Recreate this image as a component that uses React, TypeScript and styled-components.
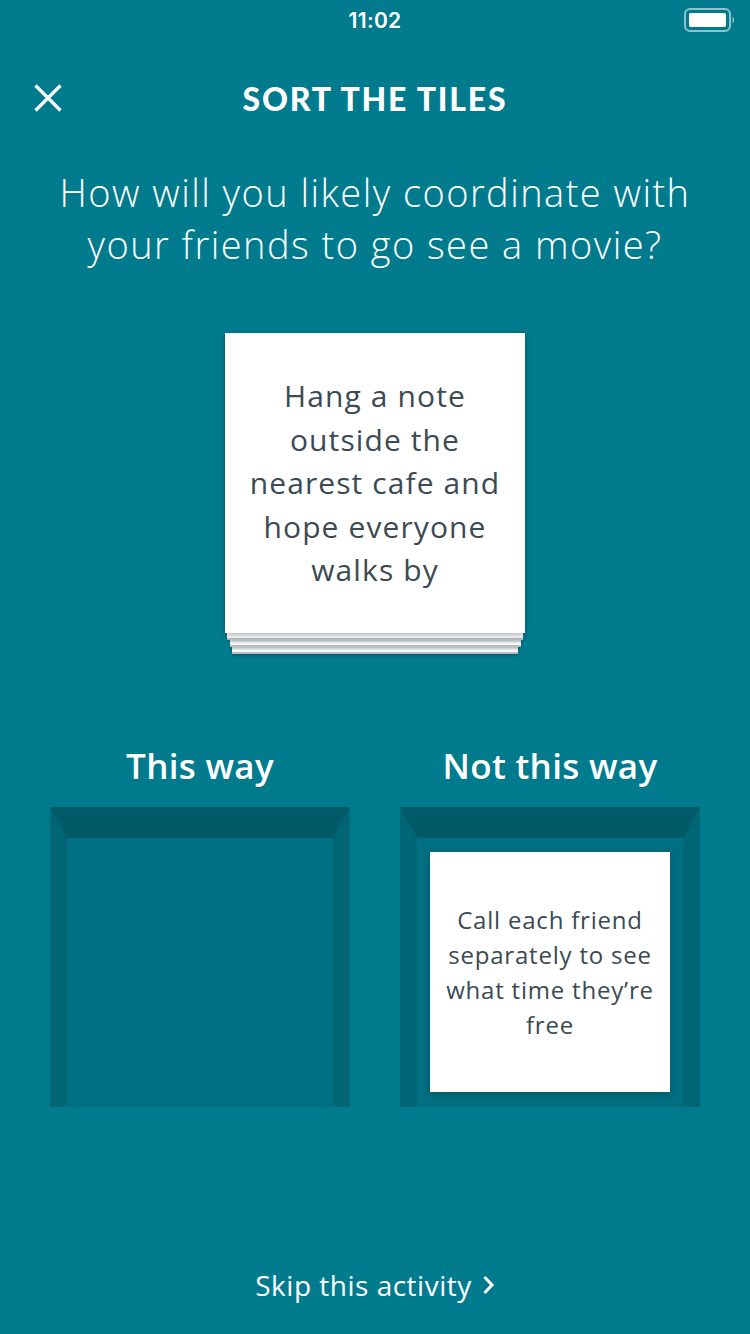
import React from "react";
import styled, { createGlobalStyle } from "styled-components";

const Global = createGlobalStyle`
  html, body { margin: 0; padding: 0; background: #007b8e; }
  * { box-sizing: border-box; }
`;

const FONT = `"Open Sans", "Noto Sans", sans-serif`;
const TITLE_FONT = `"Lato", "Open Sans", sans-serif`;

const Screen = styled.div`
  width: 750px;
  height: 1334px;
  background: #007b8e;
  color: #ffffff;
  font-family: ${FONT};
  display: flex;
  flex-direction: column;
  align-items: center;
  overflow: hidden;
`;

const StatusBar = styled.div`
  width: 100%;
  height: 40px;
  display: grid;
  grid-template-columns: 1fr auto 1fr;
  align-items: center;
  padding: 0 14px 0 14px;
`;

const Time = styled.div`
  grid-column: 2;
  font-family: "Inter", "Liberation Sans", sans-serif;
  font-weight: 600;
  font-size: 21px;
  letter-spacing: 0.3px;
`;

const BatteryWrap = styled.div`
  grid-column: 3;
  justify-self: end;
  display: flex;
  align-items: center;
`;

const Header = styled.div`
  width: 100%;
  height: 60px;
  margin-top: 28px;
  display: grid;
  grid-template-columns: 1fr auto 1fr;
  align-items: center;
  padding: 0 34px;
`;

const CloseButton = styled.button`
  justify-self: start;
  background: none;
  border: none;
  padding: 0;
  width: 28px;
  height: 28px;
  display: flex;
`;

const Title = styled.h1`
  margin: 0;
  font-family: ${TITLE_FONT};
  font-size: 32px;
  font-weight: 900;
  letter-spacing: 1.8px;
  text-transform: uppercase;
`;

const Question = styled.p`
  margin: 38px 0 0;
  font-size: 38px;
  line-height: 52px;
  font-weight: 300;
  text-align: center;
  letter-spacing: 1.45px;
  white-space: nowrap;
`;

const Stack = styled.div`
  margin-top: 63px;
  display: flex;
  flex-direction: column;
  align-items: center;
`;

const Tile = styled.div<{ $size: number; $font: number; $lh: number; $pad: number; $ls: number }>`
  width: ${(p) => p.$size}px;
  height: ${(p) => p.$size}px;
  background: #ffffff;
  color: #3b4a53;
  display: flex;
  align-items: center;
  justify-content: center;
  text-align: center;
  font-size: ${(p) => p.$font}px;
  line-height: ${(p) => p.$lh}px;
  letter-spacing: ${(p) => p.$ls}px;
  padding: 0 ${(p) => p.$pad}px;
  box-shadow: 0 2px 6px rgba(0, 30, 40, 0.35);
  position: relative;
  z-index: 4;
`;

const Layer = styled.div<{ $w: number; $z: number }>`
  width: ${(p) => p.$w}px;
  height: 7px;
  background: #ffffff;
  border-bottom: 2px solid #b9bdbf;
  box-shadow: 0 2px 3px rgba(0, 30, 40, 0.3);
  position: relative;
  z-index: ${(p) => p.$z};
`;

const Bins = styled.div`
  margin-top: 92px;
  display: grid;
  grid-template-columns: 300px 300px;
  column-gap: 50px;
`;

const Bin = styled.div`
  display: flex;
  flex-direction: column;
  align-items: center;
`;

const BinLabel = styled.div`
  font-size: 35px;
  line-height: 40px;
  font-weight: 600;
  letter-spacing: 0.3px;
`;

const Tray = styled.div`
  margin-top: 21px;
  width: 300px;
  height: 300px;
  border-style: solid;
  border-width: 31px 17px 0 17px;
  border-color: #005a68 #006675 transparent #006675;
  background: #006f81;
  display: flex;
  justify-content: center;
  padding-top: 14px;
`;

const Skip = styled.a`
  margin-top: 160px;
  display: flex;
  align-items: center;
  gap: 10px;
  font-size: 28px;
  line-height: 36px;
  color: #ffffff;
  text-decoration: none;
  letter-spacing: 0.5px;
`;

const Battery = () => (
  <svg width="52" height="24" viewBox="0 0 52 24">
    <rect x="1" y="1" width="45" height="22" rx="5" fill="none" stroke="rgba(255,255,255,0.55)" strokeWidth="2" />
    <rect x="5" y="5" width="37" height="14" rx="2" fill="#ffffff" />
    <path d="M48.5 8.5 C50.5 9 50.5 15 48.5 15.5 Z" fill="rgba(255,255,255,0.55)" />
  </svg>
);

const CloseIcon = () => (
  <svg width="28" height="28" viewBox="0 0 28 28">
    <path d="M1.5 1.5 L26.5 26.5 M26.5 1.5 L1.5 26.5" stroke="#fff" strokeWidth="3.2" strokeLinecap="butt" />
  </svg>
);

const Chevron = () => (
  <svg width="13" height="22" viewBox="0 0 13 22">
    <path d="M2.5 3 L10 11 L2.5 19" stroke="#fff" strokeWidth="3" fill="none" />
  </svg>
);

export default function App() {
  return (
    <Screen>
      <Global />
      <StatusBar>
        <Time>11:02</Time>
        <BatteryWrap>
          <Battery />
        </BatteryWrap>
      </StatusBar>
      <Header>
        <CloseButton aria-label="Close">
          <CloseIcon />
        </CloseButton>
        <Title>Sort the tiles</Title>
        <span />
      </Header>
      <Question>
        How will you likely coordinate with
        <br />
        your friends to go see a movie?
      </Question>
      <Stack>
        <Tile $size={300} $font={30} $lh={43.5} $pad={20} $ls={1.1}>
          Hang a note outside the nearest cafe and hope everyone walks by
        </Tile>
        <Layer $w={296} $z={3} />
        <Layer $w={291} $z={2} />
        <Layer $w={286} $z={1} />
      </Stack>
      <Bins>
        <Bin>
          <BinLabel>This way</BinLabel>
          <Tray />
        </Bin>
        <Bin>
          <BinLabel>Not this way</BinLabel>
          <Tray>
            <Tile $size={240} $font={24} $lh={35} $pad={10} $ls={0.8}>
              Call each friend separately to see what time they’re free
            </Tile>
          </Tray>
        </Bin>
      </Bins>
      <Skip href="#">
        Skip this activity
        <Chevron />
      </Skip>
    </Screen>
  );
}
